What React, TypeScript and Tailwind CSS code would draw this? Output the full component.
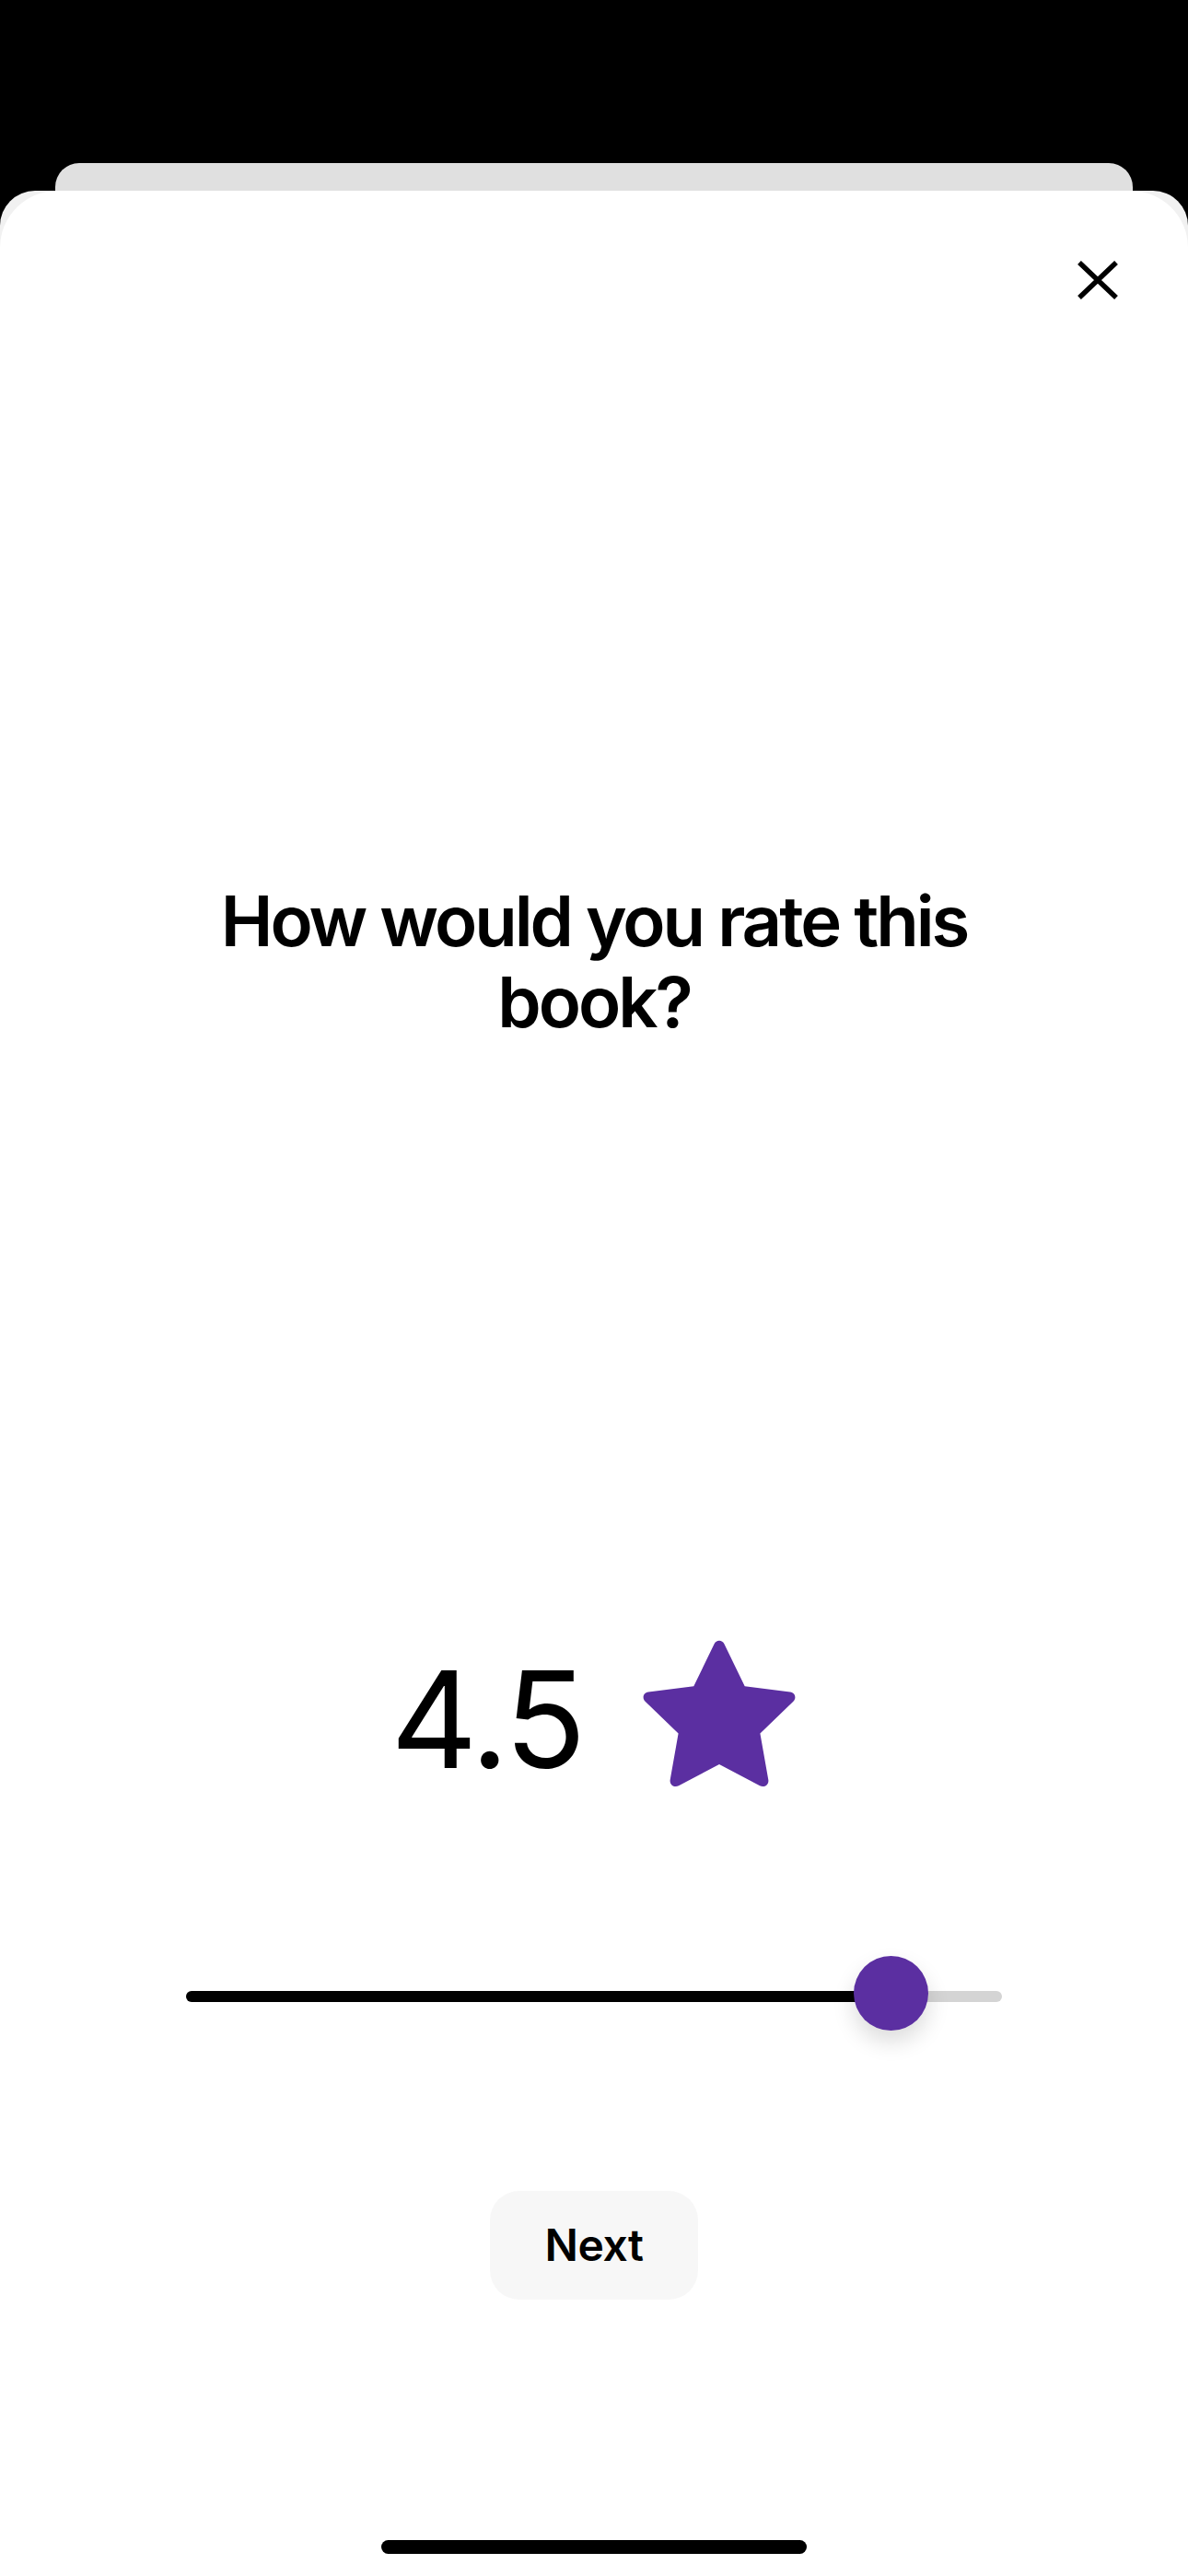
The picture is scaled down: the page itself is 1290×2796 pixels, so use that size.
import { useState } from "react";

function CloseIcon() {
  return (
    <svg width="44" height="42" viewBox="0 0 44 42" fill="none">
      <path d="M2 2L42 40M42 2L2 40" stroke="#000" strokeWidth="5.5" strokeLinecap="butt" />
    </svg>
  );
}

function Star() {
  return (
    <svg width="170" height="162" viewBox="0 0 170 162">
      <path
        d="M79.5 5.5c2.4-4.9 8.6-4.9 11 0l22.2 45.7 49.3 6.3c5.3 0.7 7.2 6.6 3.4 10.3l-36 34.7 8.9 50.3c0.9 5.4-4.6 9-9.2 6.5L85 135.9l-44.1 23.4c-4.6 2.5-10.1-1.1-9.2-6.5l8.9-50.3-36-34.7c-3.8-3.7-1.9-9.6 3.4-10.3l49.3-6.3z"
        fill="#5B2FA1"
      />
    </svg>
  );
}

function RatingSlider({ value }: { value: number }) {
  const pct = (value / 5) * 100;
  return (
    <div className="w-[886px] h-[82px] flex items-center">
      <div className="relative w-full h-[12px] rounded-full bg-[#d4d4d4]">
        <div className="absolute left-0 top-0 h-full rounded-full bg-black" style={{ width: `calc(40px + (100% - 80px) * ${pct / 100})` }} />
        <div
          className="absolute top-1/2 w-[81px] h-[81px] -mt-[44px] -ml-[40px] rounded-full bg-[#5B2FA1] shadow-[0_12px_24px_rgba(0,0,0,0.14)]"
          style={{ left: `calc(40px + (100% - 80px) * ${pct / 100})` }}
        />
      </div>
    </div>
  );
}

export default function App() {
  const [rating] = useState(4.5);

  return (
    <div className="w-[1290px] h-[2796px] bg-black flex flex-col pt-[177px] overflow-hidden" style={{ fontFamily: "Inter, 'Noto Sans', sans-serif" }}>
      {/* sheet behind */}
      <div className="mx-[60px] h-[30px] shrink-0 rounded-t-[26px] bg-[#e0e0e0]" />

      {/* front sheet */}
      <div className="flex-1 flex flex-col rounded-t-[38px] bg-[#f1f1f1]">
        <div className="flex-1 flex flex-col items-center rounded-t-[62px] bg-white">
          {/* Header */}
          <div className="w-full flex justify-end pt-[76px] pr-[76px]">
            <button className="w-[44px] h-[42px] flex items-center justify-center">
              <CloseIcon />
            </button>
          </div>

          {/* Question */}
          <h1 className="mt-[630px] w-[900px] text-center text-[76px] leading-[88px] font-semibold tracking-[-0.04em] text-black">
            How would you rate this book?
          </h1>

          {/* Rating value */}
          <div className="mt-[649px] h-[160px] flex items-center gap-[62px]">
            <span className="pt-[12px] text-[146px] leading-[146px] font-normal tracking-[-0.02em] text-black">{rating}</span>
            <Star />
          </div>

          {/* Slider */}
          <div className="mt-[186px]">
            <RatingSlider value={rating} />
          </div>

          {/* Next */}
          <button className="mt-[170px] w-[226px] h-[118px] rounded-[32px] bg-[#f7f7f7] text-[48px] font-semibold tracking-[-0.01em] text-black">
            Next
          </button>

          {/* Home indicator */}
          <div className="mt-auto mb-[24px] w-[462px] h-[15px] rounded-full bg-black" />
        </div>
      </div>
    </div>
  );
}
